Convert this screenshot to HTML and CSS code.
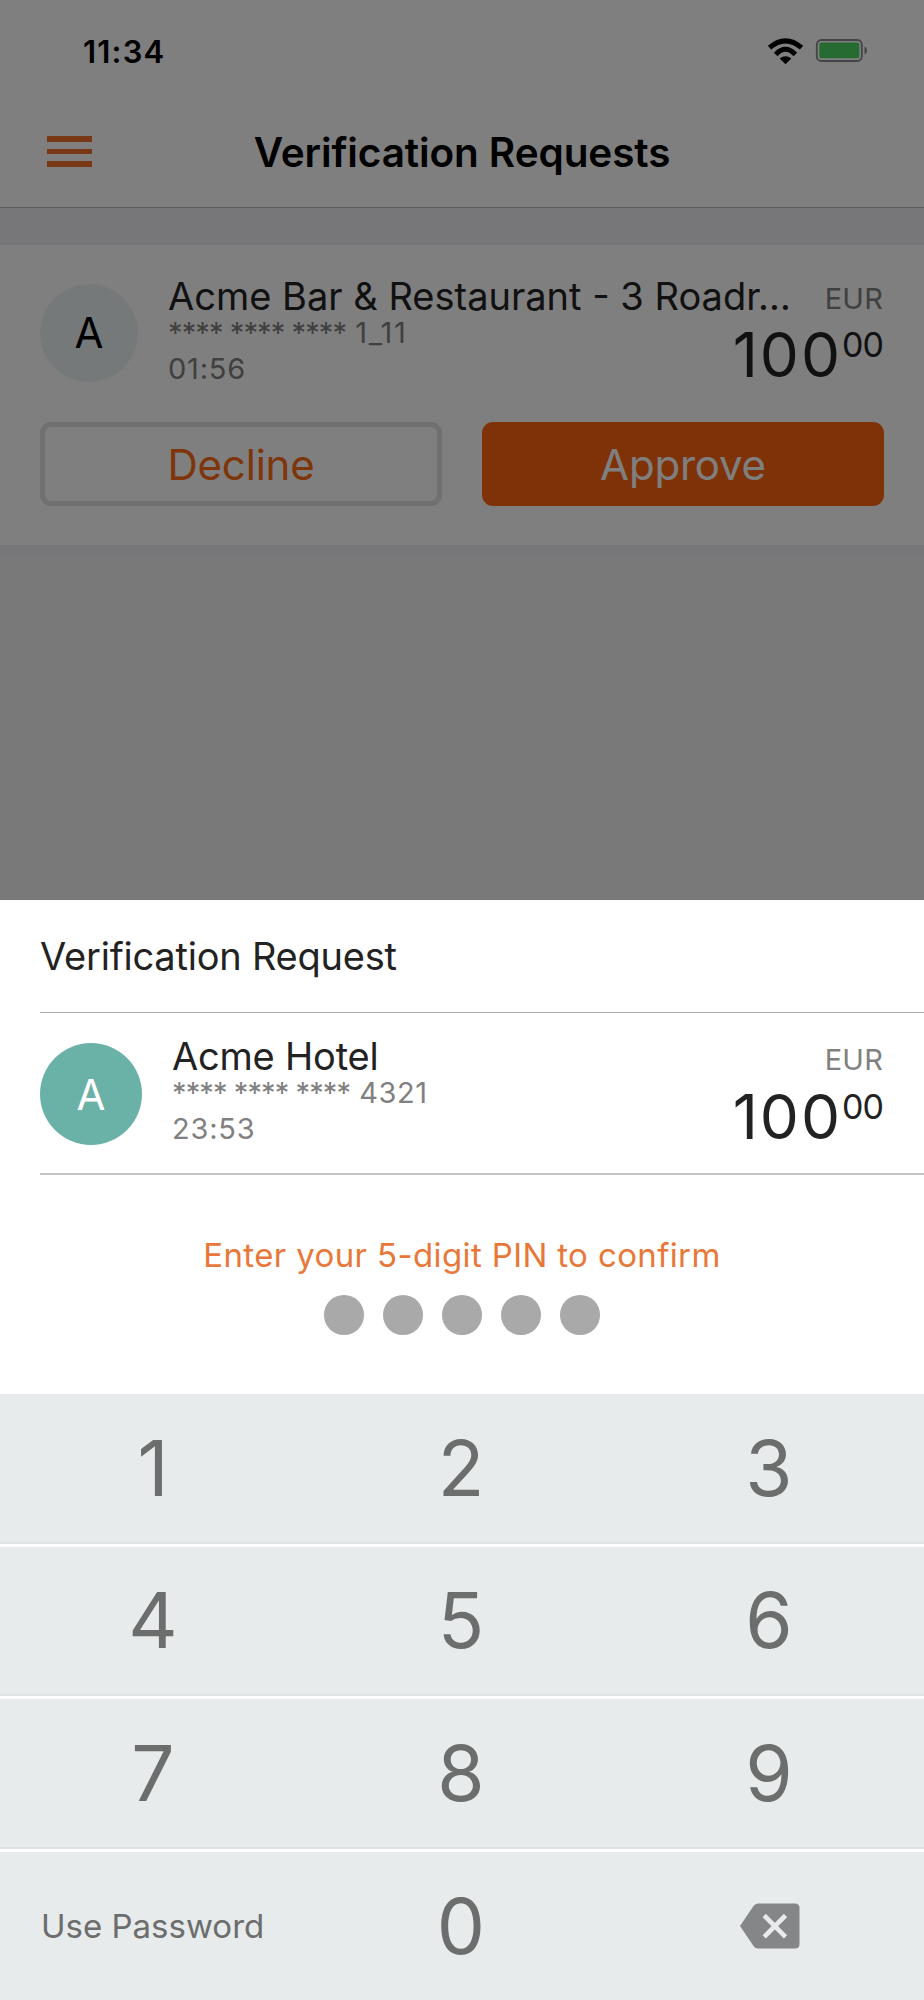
FILE: index.html
```html
<!DOCTYPE html>
<html lang="en">
<head>
    <meta charset="UTF-8">
    <meta name="viewport" content="width=device-width, initial-scale=1.0">
    <title>Verification Requests</title>
    <link rel="stylesheet" href="styles.css">
</head>
<body>

    <div class="screen">
        <div class="status-bar">
            <span class="time">11:34</span>
            <div class="status-icons">
                <svg width="37" height="27" viewBox="0 0 37 27">
                    <path d="M18.500 26.300 L12.700 20.600 Q18.500 15.700 24.300 20.600 Z" fill="#000"/>
                    <path d="M8.700 16.400 Q18.500 6.200 28.300 16.400" fill="none" stroke="#000" stroke-width="5"/>
                    <path d="M2.500 9.700 Q18.500 -3.800 34.500 9.700" fill="none" stroke="#000" stroke-width="5"/>
                </svg>
                <svg class="battery" width="53" height="23" viewBox="0 0 53 23">
                    <rect x="1.800" y="1" width="45" height="21" rx="4.500" fill="none" stroke="#88888c" stroke-width="1.800"/>
                    <rect x="4.300" y="3.500" width="40" height="15.700" rx="2" fill="#4cd964"/>
                    <path d="M49.500 7.500 Q52 8.500 52 11.500 Q52 14.500 49.500 15.500 Z" fill="#88888c"/>
                </svg>
            </div>
        </div>

        <div class="nav-bar">
            <div class="menu">
                <span></span>
                <span></span>
                <span></span>
            </div>
            <h1>Verification Requests</h1>
        </div>

        <div class="card">
            <div class="request">
                <div class="avatar">A</div>
                <div class="details">
                    <div class="line">
                        <p class="name">Acme Bar &amp; Restaurant - 3 Roadr…</p>
                        <p class="currency">EUR</p>
                    </div>
                    <div class="line">
                        <div>
                            <p class="number">**** **** **** <span class="masked">1_11</span></p>
                            <p class="timer">01:56</p>
                        </div>
                        <p class="value">100<span class="cents">00</span></p>
                    </div>
                </div>
            </div>
            <div class="buttons">
                <button class="decline">Decline</button>
                <button class="approve">Approve</button>
            </div>
        </div>

        <div class="overlay"></div>

        <div class="sheet">
            <h2>Verification Request</h2>
            <div class="request sheet-request">
                <div class="avatar">A</div>
                <div class="details">
                    <div class="line">
                        <p class="name">Acme Hotel</p>
                        <p class="currency">EUR</p>
                    </div>
                    <div class="line">
                        <div>
                            <p class="number">**** **** **** <span>4321</span></p>
                            <p class="timer">23:53</p>
                        </div>
                        <p class="value">100<span class="cents">00</span></p>
                    </div>
                </div>
            </div>

            <div class="pin">
                <p>Enter your 5-digit PIN to confirm</p>
                <div class="dots">
                    <span></span>
                    <span></span>
                    <span></span>
                    <span></span>
                    <span></span>
                </div>
            </div>

            <div class="keypad">
                <div class="row">
                    <div class="key">1</div>
                    <div class="key">2</div>
                    <div class="key">3</div>
                </div>
                <div class="row">
                    <div class="key">4</div>
                    <div class="key">5</div>
                    <div class="key">6</div>
                </div>
                <div class="row">
                    <div class="key">7</div>
                    <div class="key">8</div>
                    <div class="key">9</div>
                </div>
                <div class="row">
                    <div class="key use-password">Use Password</div>
                    <div class="key">0</div>
                    <div class="key backspace">
                        <svg width="60" height="46" viewBox="0 0 60 46">
                            <path d="M0 23 L13.500 3 Q15.300 0.500 18 0.500 H55 Q59.500 0.500 59.500 5 V41 Q59.500 45.500 55 45.500 H18 Q15.300 45.500 13.500 43 Z" fill="#858687"/>
                            <path d="M24.200 12.500 L45.500 33.800 M45.500 12.500 L24.200 33.800" fill="none" stroke="#e7ebeb" stroke-width="4.600"/>
                        </svg>
                    </div>
                </div>
            </div>
        </div>
    </div>

</body>
</html>
```
FILE: styles.css
```css
* {
    box-sizing: border-box;
}

body {
    margin: 0;
    font-family: Inter, "Liberation Sans", sans-serif;
}

h1, h2, p {
    margin: 0;
    font-weight: 400;
}

.screen {
    position: relative;
    width: 924px;
    height: 2000px;
    overflow: hidden;
    background-color: #f2f2f2;
}

.status-bar {
    display: flex;
    justify-content: space-between;
    height: 104px;
    padding: 32px 56px 0 83px;
    background-color: #ffffff;
}

.time {
    font-size: 31px;
    font-weight: 600;
    line-height: 40px;
    letter-spacing: 1.2px;
}

.status-icons {
    display: flex;
    gap: 11px;
    padding-top: 6px;
}

.battery {
    margin-top: 1px;
}

.nav-bar {
    display: grid;
    grid-template-columns: 45px 1fr 45px;
    align-items: center;
    height: 104px;
    padding: 0 47px 5px;
    background-color: #ffffff;
    border-bottom: 1px solid #b8b8bb;
}

.nav-bar h1 {
    font-size: 40.5px;
    font-weight: 600;
    line-height: 98px;
    letter-spacing: -0.1px;
    text-align: center;
}

.menu {
    display: flex;
    flex-direction: column;
    gap: 7px;
    margin-top: -3px;
}

.menu span {
    height: 5.4px;
    background-color: #f0712c;
}

.card {
    height: 349px;
    padding: 24px 40px 0;
    background-color: #ffffff;
    border-top: 37px solid #efeff4;
    border-bottom: 12px solid #efeff4;
}

.request {
    display: flex;
    color: #222222;
}

.avatar {
    flex: none;
    width: 98px;
    height: 98px;
    margin-top: 15px;
    border-radius: 50%;
    background-color: #edf3f5;
    color: #000000;
    font-size: 42px;
    line-height: 98px;
    text-align: center;
}

.details {
    flex: 1;
    min-width: 0;
    margin-left: 30px;
    padding-right: 1px;
    white-space: nowrap;
}

.line {
    display: flex;
    justify-content: space-between;
}

.name {
    height: 46px;
    padding-top: 8px;
    font-size: 38px;
    line-height: 38px;
}

.number, .timer, .currency {
    font-size: 29px;
    line-height: 36px;
    color: #808080;
}

.number {
    letter-spacing: -0.9px;
}

.number span {
    margin-left: 2px;
    letter-spacing: 0.5px;
}

.number .masked {
    letter-spacing: 1.7px;
}

.timer {
    letter-spacing: 0.8px;
}

.currency {
    height: 46px;
    padding-top: 12px;
    letter-spacing: 0.2px;
}

.value {
    display: flex;
    padding-top: 2px;
    font-size: 62px;
    line-height: 76px;
    letter-spacing: 2px;
}

.cents {
    font-size: 34px;
    line-height: 56px;
    letter-spacing: -1px;
}

.buttons {
    display: grid;
    grid-template-columns: 1fr 1fr;
    gap: 40px;
    margin-top: 29px;
}

button {
    height: 84px;
    padding: 0;
    border: none;
    border-radius: 11px;
    font-family: inherit;
    font-size: 42px;
    letter-spacing: -0.2px;
}

.decline {
    border: 5px solid #e0e0e0;
    background-color: #ffffff;
    color: #ff6a14;
}

.approve {
    background-color: #ff640e;
    color: #ffffff;
}

.overlay {
    position: absolute;
    inset: 0;
    background-color: rgba(0, 0, 0, 0.5);
}

.sheet {
    position: absolute;
    left: 0;
    right: 0;
    bottom: 0;
    height: 1100px;
    background-color: #ffffff;
}

.sheet h2 {
    height: 112px;
    margin-left: 40px;
    color: #222222;
    font-size: 38px;
    line-height: 112px;
    letter-spacing: -0.22px;
}

.sheet-request {
    height: 163px;
    margin-left: 40px;
    padding: 16px 40px 0 0;
    border-top: 1px solid #acacac;
    border-bottom: 2px solid #c4c4c4;
}

.sheet-request .avatar {
    width: 102px;
    height: 102px;
    margin-top: 13.5px;
    background-color: #6ab1a8;
    color: #ffffff;
    line-height: 103px;
}

.sheet-request .name {
    letter-spacing: -0.2px;
}

.sheet-request .currency {
    padding-top: 13px;
}

.sheet-request .value {
    padding-top: 4px;
}

.pin {
    display: flex;
    flex-direction: column;
    align-items: center;
    height: 219px;
    padding-top: 60px;
}

.pin p {
    color: #e87839;
    font-size: 33px;
    line-height: 40px;
    letter-spacing: 0.37px;
}

.dots {
    display: flex;
    gap: 19.5px;
    margin-top: 20px;
}

.dots span {
    width: 39.5px;
    height: 39.5px;
    border-radius: 50%;
    background-color: #a9a9a9;
}

.row {
    display: grid;
    grid-template-columns: 1fr 1fr 1fr;
    height: 152.6px;
    background-color: #e7ebeb;
    border-bottom: 3px solid #ffffff;
    box-shadow: inset 0 -2px #e0e1e2;
}

.row:last-child {
    border-bottom-color: #e7ebeb;
    box-shadow: none;
}

.key {
    display: flex;
    align-items: center;
    justify-content: center;
    padding: 0 2px 2px 0;
    color: #6c6d6d;
    font-size: 76.5px;
    line-height: 94px;
}

.use-password {
    justify-content: flex-start;
    padding-left: 41px;
    font-size: 33px;
}

.backspace {
    padding: 0 0 1px;
}
```
